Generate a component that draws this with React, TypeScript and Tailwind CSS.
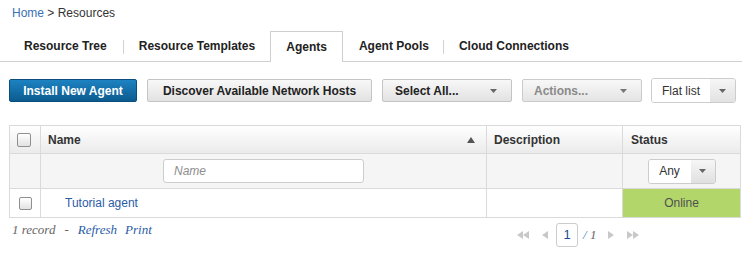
import React from "react";

function Caret({ className = "" }: { className?: string }) {
  return (
    <svg className={className} width="7" height="4" viewBox="0 0 7 4">
      <path d="M0 0h7L3.5 4z" fill="currentColor" />
    </svg>
  );
}

function Checkbox({ size = 13 }: { size?: number }) {
  return (
    <div
      className={`${size === 14 ? "w-[14px] h-[14px]" : "w-[13px] h-[13px]"} rounded-[2px] border border-[#8f8f8f] bg-linear-to-b from-white to-[#e2e2e2]`}
    />
  );
}

function PagerArrow({ dir, double }: { dir: "left" | "right"; double?: boolean }) {
  const one = dir === "left" ? "M6 0v8L0 4z" : "M0 0v8l6-4z";
  return (
    <svg width={double ? 12 : 6} height="8" viewBox={double ? "0 0 12 8" : "0 0 6 8"} className="text-[#c8c8c8]">
      <path d={one} fill="currentColor" />
      {double && <path d={one} transform="translate(6 0)" fill="currentColor" />}
    </svg>
  );
}

const tabs = ["Resource Tree", "Resource Templates", "Agents", "Agent Pools", "Cloud Connections"];

export default function App() {
  return (
    <div className="w-[742px] h-[254px] bg-white font-['Liberation_Sans',Arial,sans-serif] text-[12px] leading-[14px] text-[#222] overflow-hidden">
      {/* breadcrumb */}
      <div className="pt-[6px] pl-[12px] h-[31px]">
        <span className="text-[#3a70b4]">Home</span>
        <span className="text-[#333]"> &gt; Resources</span>
      </div>

      {/* tabs */}
      <div className="flex items-end h-[31px] border-b border-[#d0d0d0] pl-[8px]">
        {tabs.map((t, i) => {
          const active = t === "Agents";
          return (
            <React.Fragment key={t}>
              {(i === 1 || i === 4) && <div className="w-px h-[14px] bg-[#d2d2d2] self-center mt-[1px]" />}
              {active ? (
                <div className="h-[31px] -mb-px px-[15px] border border-b-0 border-[#cfcfcf] bg-white flex items-center font-bold text-[#222]">
                  {t}
                </div>
              ) : (
                <div
                  className={`h-[30px] flex items-center font-bold text-[#222] ${i === 0 ? "px-4" : i === 3 ? "pl-[16px] pr-[14px]" : "px-[15px]"}`}
                >
                  {t}
                </div>
              )}
            </React.Fragment>
          );
        })}
      </div>

      {/* toolbar */}
      <div className="flex items-center h-[25px] mt-[16px] pl-[9px]">
        <button
          type="button"
          className="h-[23px] w-[128px] rounded-[2px] border border-[#0b4d7c] bg-linear-to-b from-[#1d83c2] to-[#0c5b8f] text-white font-bold text-center"
        >
          Install New Agent
        </button>
        <button
          type="button"
          className="ml-[10px] h-[23px] w-[225px] rounded-[2px] border border-[#c4c4c4] bg-linear-to-b from-[#f8f8f8] to-[#e2e2e2] font-bold text-[#222] text-center"
        >
          Discover Available Network Hosts
        </button>
        <button
          type="button"
          className="ml-[10px] h-[23px] w-[130px] rounded-[2px] border border-[#c4c4c4] bg-linear-to-b from-[#f8f8f8] to-[#e2e2e2] font-bold text-[#222] flex items-center justify-between pl-[12px] pr-[14px]"
        >
          Select All...
          <Caret className="text-[#666]" />
        </button>
        <button
          type="button"
          className="ml-[10px] h-[23px] w-[120px] rounded-[2px] border border-[#cbcbcb] bg-linear-to-b from-[#f8f8f8] to-[#e4e4e4] font-bold text-[#8a8a8a] flex items-center justify-between pl-[11px] pr-[14px]"
        >
          Actions...
          <Caret className="text-[#777]" />
        </button>
        <div className="ml-[9px] h-[25px] w-[85px] rounded-[3px] border border-[#cccccc] flex overflow-hidden">
          <div className="w-[58px] bg-white flex items-center pl-[10px] text-[#333]">Flat list</div>
          <div className="flex-1 bg-linear-to-b from-[#f6f6f6] to-[#e2e2e2] flex items-center justify-center">
            <Caret className="text-[#666]" />
          </div>
        </div>
      </div>

      {/* table */}
      <div className="mt-[22px] ml-[9px] w-[732px] border border-[#dadada]">
        <div className="grid grid-cols-[30px_446px_136px_118px] h-[28px] border-b border-[#dadada] bg-linear-to-b from-white to-[#ebebeb]">
          <div className="flex items-center pl-[7px]">
            <Checkbox size={14} />
          </div>
          <div className="border-l border-[#dadada] flex items-center justify-between pl-[7px] pr-[11px] font-bold text-[#333]">
            Name
            <svg width="8" height="6" viewBox="0 0 8 6">
              <path d="M4 0l4 6H0z" fill="#555" />
            </svg>
          </div>
          <div className="border-l border-[#dadada] flex items-center pl-[7px] font-bold text-[#333]">Description</div>
          <div className="border-l border-[#dadada] flex items-center pl-[8px] font-bold text-[#333]">Status</div>
        </div>

        <div className="grid grid-cols-[30px_446px_136px_118px] h-[35px] border-b border-[#dadada] bg-[#f5f5f5]">
          <div />
          <div className="border-l border-[#dadada] flex items-center justify-center">
            <div className="w-[201px] h-[24px] rounded-[3px] border border-[#cdcdcd] bg-white flex items-center pl-[10px] italic text-[#8e8e8e]">
              Name
            </div>
          </div>
          <div className="border-l border-[#dadada]" />
          <div className="border-l border-[#dadada] flex items-center justify-center">
            <div className="w-[68px] h-[25px] rounded-[3px] border border-[#cccccc] flex overflow-hidden">
              <div className="w-[42px] bg-white flex items-center justify-center text-[#333]">Any</div>
              <div className="flex-1 bg-linear-to-b from-[#f6f6f6] to-[#e0e0e0] flex items-center justify-center">
                <Caret className="text-[#666]" />
              </div>
            </div>
          </div>
        </div>

        <div className="grid grid-cols-[30px_446px_136px_118px] h-[28px]">
          <div className="flex items-center pl-[9px]">
            <Checkbox />
          </div>
          <div className="border-l border-[#dadada] flex items-center pl-[24px] text-[#2a5ca6]">Tutorial agent</div>
          <div className="border-l border-[#dadada]" />
          <div className="border-l border-[#dadada] bg-[#b3d66b] flex items-center justify-center text-[#4f4f4f]">
            Online
          </div>
        </div>
      </div>

      {/* footer */}
      <div className="flex items-start">
        <div className="w-[517px] pl-[12px] pt-[4px] font-['Liberation_Serif',Georgia,serif] italic text-[13px] leading-[16px]">
          <span className="text-[#666]">1 record</span>
          <span className="text-[#666] mx-[9px]">-</span>
          <span className="text-[#2a5ca6]">Refresh</span>
          <span className="text-[#2a5ca6] ml-[8px]">Print</span>
        </div>
        <div className="flex items-center h-[24px] mt-[5px]">
          <PagerArrow dir="left" double />
          <div className="ml-[13px] flex">
            <PagerArrow dir="left" />
          </div>
          <div className="ml-[8px] w-[22px] h-[24px] rounded-[3px] border border-[#cccccc] bg-white flex items-center justify-center text-[#1d4f8f] text-[13px]">
            1
          </div>
          <span className="ml-[5px] font-['Liberation_Serif',Georgia,serif] italic text-[#666] text-[13px]">
            <span className="text-[#4a7fc0]">/</span> 1
          </span>
          <div className="ml-[12px] flex">
            <PagerArrow dir="right" />
          </div>
          <div className="ml-[13px] flex">
            <PagerArrow dir="right" double />
          </div>
        </div>
      </div>
    </div>
  );
}
